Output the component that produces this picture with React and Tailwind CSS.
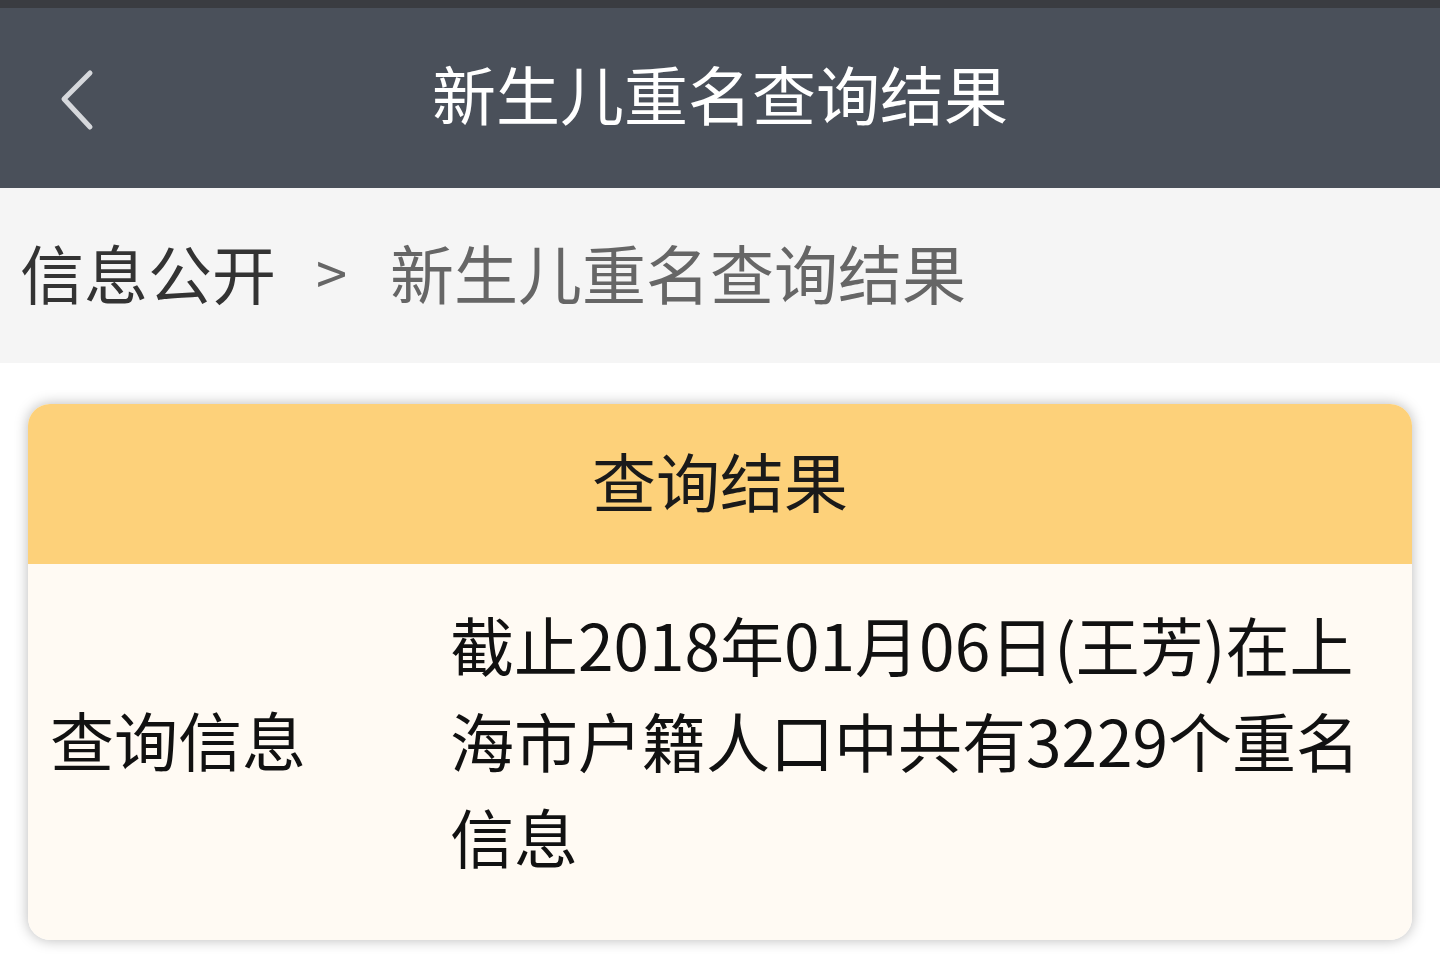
import React from "react";

const Chevron = () => (
  <svg width="40" height="64" viewBox="0 0 40 64" className="block">
    <polyline
      points="31,4 5,30 31,58"
      fill="none"
      stroke="#d6d8dc"
      strokeWidth="5"
      strokeLinecap="round"
      strokeLinejoin="round"
    />
  </svg>
);

const App = () => {
  return (
    <div className="w-[1440px] min-h-[967px] bg-white font-['Noto_Sans_CJK_SC',sans-serif]">
      <div className="h-[8px] bg-[#3a3c41]"></div>
      <div className="h-[180px] bg-[#4a505a] flex items-center pb-[12px] relative">
        <div className="absolute left-[59px] top-[61px]">
          <Chevron />
        </div>
        <h1 className="w-full text-center text-white text-[64px] leading-none">
          新生儿重名查询结果
        </h1>
      </div>
      <div className="h-[175px] bg-[#f5f5f5] flex items-center pl-[20px] pb-[10px] text-[64px] leading-none">
        <span className="text-[#333333]">信息公开</span>
        <span className="text-[#666666] ml-[40px] mr-[43px] text-[56px]">&gt;</span>
        <span className="text-[#666666]">新生儿重名查询结果</span>
      </div>
      <div className="px-[28px] pt-[41px]">
        <div className="rounded-[22px] overflow-hidden shadow-[0_0_14px_rgba(0,0,0,0.28)]">
          <div className="h-[160px] bg-[#fdd17a] flex items-center justify-center pb-[10px]">
            <span className="text-[64px] leading-none text-[#1a1a1a]">查询结果</span>
          </div>
          <div className="bg-[#fffaf3] flex items-center pt-[31px] pb-[57px]">
            <div className="w-[422px] pl-[22px] pb-[2px] text-[64px] leading-[96px] text-[#111111]">
              查询信息
            </div>
            <div className="w-[936px] text-[64px] leading-[96px] text-[#111111]">
              截止2018年01月06日(王芳)在上海市户籍人口中共有3229个重名信息
            </div>
          </div>
        </div>
      </div>
    </div>
  );
};

export default App;
